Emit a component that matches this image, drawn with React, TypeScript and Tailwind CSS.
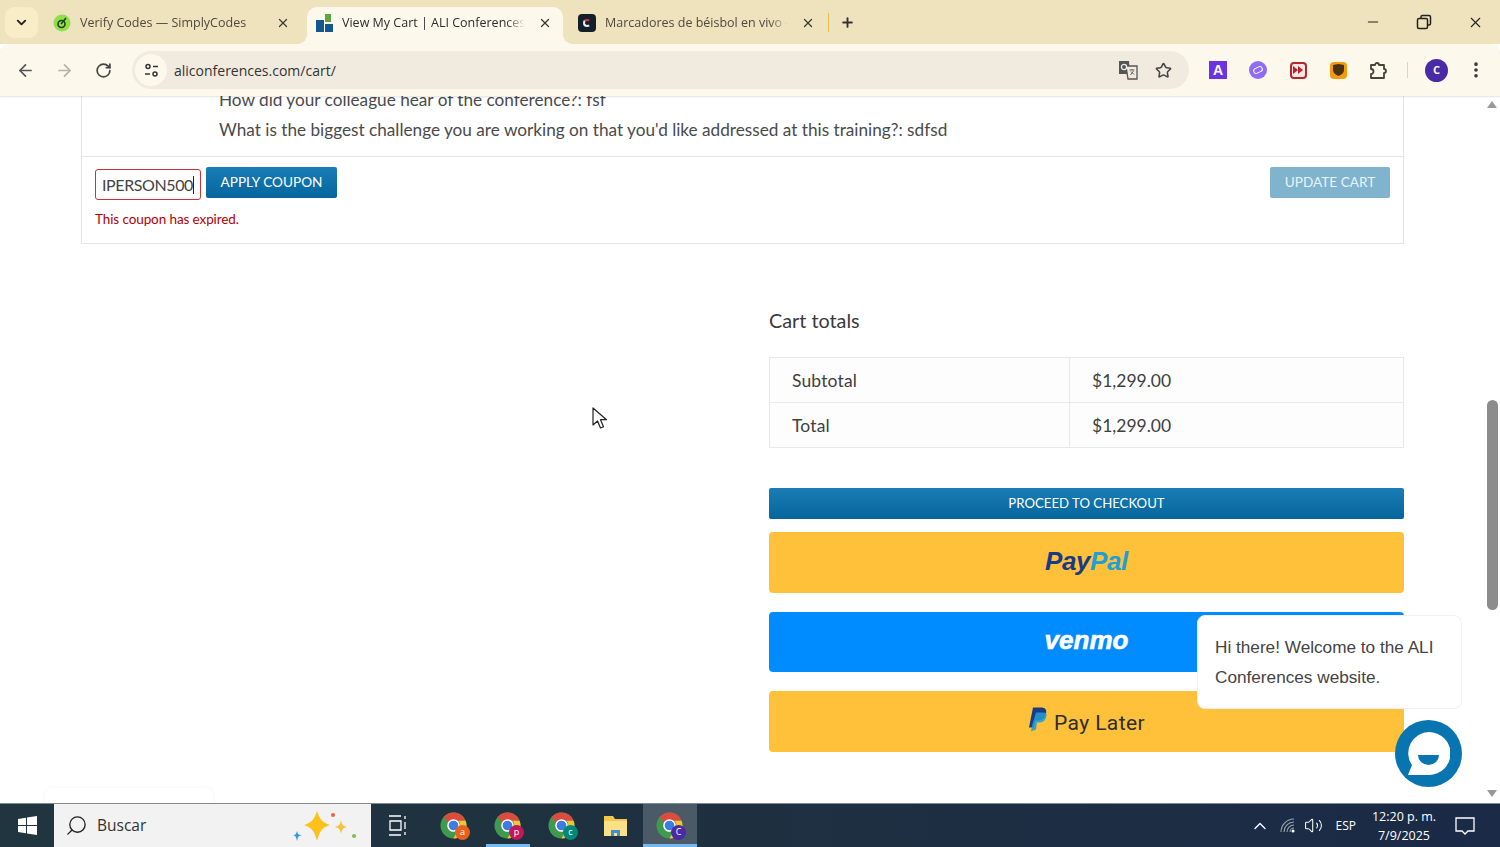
import { ArrowLeft, ArrowRight, RotateCw, Star, X, Plus, ChevronDown, Minus, EllipsisVertical, ChevronUp, Volume2, Search } from 'lucide-react';

function ChromeIcon({ badge, color }: { badge: string; color: string }) {
  return (
    <div className="relative w-[28px] h-[32px] flex items-center justify-center">
      <svg width="27" height="27" viewBox="0 0 28 28">
        <circle cx="14" cy="14" r="13.5" fill="#3f9a4f" />
        <path d="M14 .5A13.5 13.5 0 0 1 26.5 9H14a5 5 0 0 0-5 3L4 5A13.5 13.5 0 0 1 14 .5z" fill="#dd4b3e" />
        <path d="M26.5 9A13.5 13.5 0 0 1 14 27.5L19 17a5 5 0 0 0 0-8z" fill="#f4c531" />
        <circle cx="14" cy="14" r="6.5" fill="#fff" />
        <circle cx="14" cy="14" r="5" fill="#3d7de0" />
      </svg>
      <div className={`absolute right-[-3px] bottom-[2px] w-[15px] h-[15px] rounded-full flex items-center justify-center text-[9px] text-white ${color}`}>
        {badge}
      </div>
    </div>
  );
}

function Tab({ title, active, icon }: { title: string; active?: boolean; icon: React.ReactNode }) {
  return (
    <div className={`relative flex items-center h-[37px] pb-[6px] pl-[8px] w-[256px] shrink-0 ${active ? 'bg-[#fdf8ec] rounded-t-[10px]' : ''}`}>
      {active && (
        <>
          <div className="absolute -left-[10px] bottom-0 w-[10px] h-[10px] bg-[radial-gradient(circle_at_0_0,transparent_10px,#fdf8ec_10px)]" />
          <div className="absolute -right-[10px] bottom-0 w-[10px] h-[10px] bg-[radial-gradient(circle_at_100%_0,transparent_10px,#fdf8ec_10px)]" />
        </>
      )}
      <div className="w-[18px] h-[18px] flex items-center justify-center shrink-0">{icon}</div>
      <span className={`ml-[9px] w-[183px] overflow-hidden whitespace-nowrap text-[12.5px] leading-[18px] [mask-image:linear-gradient(to_right,black_90%,transparent)] ${active ? 'text-[#2d2d2d]' : 'text-[#4d4a40]'}`}>{title}</span>
      <X className="ml-[13px] w-[14px] h-[14px] text-[#3d3a32] shrink-0" strokeWidth={2.2} />
    </div>
  );
}

function ExtButton({ children }: { children: React.ReactNode }) {
  return <div className="w-[40px] flex items-center justify-center">{children}</div>;
}

export default function App() {
  return (
    <div className="w-[1500px] h-[847px] flex flex-col overflow-hidden bg-white font-['Lato','Noto_Sans',sans-serif]">
      {/* Tab strip */}
      <div className="h-[44px] bg-[#efe3bd] flex items-end shrink-0 font-['Open_Sans',sans-serif]">
        <div className="self-start mt-[7px] ml-[5px] w-[33px] h-[31px] rounded-[9px] bg-[#f8edc6] flex items-center justify-center">
          <ChevronDown className="w-[15px] h-[15px] text-[#222]" strokeWidth={3} />
        </div>
        <div className="ml-[7px] flex items-end gap-[6px]">
          <Tab
            title="Verify Codes — SimplyCodes"
            icon={
              <svg width="18" height="18" viewBox="0 0 18 18" fill="none">
                <circle cx="9" cy="9" r="8.500" fill="#8ee04a" />
                <circle cx="8.500" cy="10" r="3.500" stroke="#24401c" strokeWidth="1.600" />
                <path d="M8 10l5-6" stroke="#24401c" strokeWidth="1.600" />
              </svg>
            }
          />
          <Tab
            active
            title="View My Cart | ALI Conferences"
            icon={
              <svg width="17" height="18" viewBox="0 0 17 18">
                <rect x="0" y="6" width="8" height="12" fill="#14568f" />
                <rect x="9" y="10" width="8" height="8" fill="#14568f" />
                <rect x="9" y="0" width="6" height="8" fill="#5da642" />
              </svg>
            }
          />
          <div className="ml-[1px]">
            <Tab
              title="Marcadores de béisbol en vivo - "
              icon={
                <div className="w-[18px] h-[18px] rounded-[4px] bg-[#13202b] flex items-center justify-center">
                  <div className="w-[8px] h-[8px] rounded-full border-2 border-l-[#e8e8e8] border-t-[#d9363e] border-r-[#13202b] border-b-[#e8e8e8]" />
                </div>
              }
            />
          </div>
        </div>
        <div className="self-center flex items-center ml-[2px]">
          <div className="w-px h-[19px] bg-[#e4bd55]" />
          <Plus className="ml-[11px] w-[15px] h-[15px] text-[#333]" strokeWidth={3} />
        </div>
        <div className="flex-1" />
        <div className="self-center flex items-center h-[44px] pr-[16px] gap-[35px]">
          <Minus className="w-[16px] h-[16px] text-[#222]" strokeWidth={1.6} />
          <svg width="16" height="16" viewBox="0 0 16 16" fill="none" stroke="#222" strokeWidth="1.5">
            <rect x="1.5" y="4.5" width="10" height="10" rx="1.5" />
            <path d="M5 4V3a1.5 1.5 0 0 1 1.5-1.5H13A1.5 1.5 0 0 1 14.5 3v6.5A1.5 1.5 0 0 1 13 11h-1" />
          </svg>
          <X className="w-[17px] h-[17px] text-[#222]" strokeWidth={1.6} />
        </div>
      </div>

      {/* Toolbar */}
      <div className="h-[52px] bg-[#fdf8ec] rounded-t-[10px] flex items-center shrink-0 shadow-[0_1px_2px_rgba(0,0,0,0.12)] z-10 font-['Open_Sans',sans-serif]">
        <ArrowLeft className="ml-[16px] w-[19px] h-[19px] text-[#555]" strokeWidth={2.2} />
        <ArrowRight className="ml-[20px] w-[19px] h-[19px] text-[#b5b2a8]" strokeWidth={2.2} />
        <RotateCw className="ml-[21px] w-[17px] h-[17px] text-[#444]" strokeWidth={2.4} />
        <div className="ml-[20px] w-[1057px] h-[38px] rounded-full bg-[#f1ebdf] flex items-center pl-[3px] pr-[17px]">
          <div className="w-[32px] h-[32px] rounded-full bg-[#fdf8ec] flex items-center justify-center">
            <svg width="15" height="15" viewBox="0 0 15 15" fill="none" stroke="#333" strokeWidth="1.5">
              <circle cx="4" cy="3.5" r="2" />
              <path d="M9 3.5h5M1 11h5" />
              <circle cx="11" cy="11" r="2" />
            </svg>
          </div>
          <span className="ml-[7px] text-[14px] text-[#333]">aliconferences.com/cart/</span>
          <div className="flex-1" />
          <svg width="20" height="20" viewBox="0 0 20 20">
            <path d="M1 1h10l1 13H1z" fill="#555" />
            <path d="M8 6h11v13H10z" fill="#f1ebdf" stroke="#555" strokeWidth="1.3" />
            <circle cx="6" cy="7" r="2.6" fill="none" stroke="#eee" strokeWidth="1.3" />
            <path d="M11.5 10h5M14 9v1M12.5 15l3-4M13 11.5l3 3" stroke="#555" strokeWidth="0.9" />
          </svg>
          <Star className="ml-[17px] w-[17px] h-[17px] text-[#444]" strokeWidth={2.2} />
        </div>
        <div className="ml-[9px] flex items-center">
          <ExtButton>
            <div className="w-[18px] h-[18px] bg-[#6a35e0] flex items-center justify-center text-white text-[14px] font-bold font-['Liberation_Sans',sans-serif]">A</div>
          </ExtButton>
          <ExtButton>
            <div className="w-[18px] h-[18px] rounded-full bg-[#8f6cf0] flex items-center justify-center">
              <div className="w-[10px] h-[6px] rounded-full border-[1.5px] border-white -rotate-[25deg]" />
            </div>
          </ExtButton>
          <ExtButton>
            <div className="w-[17px] h-[17px] rounded-[4px] border-2 border-[#b3262e] bg-[#f9e5e2] flex items-center justify-center">
              <svg width="10" height="8" viewBox="0 0 10 8" fill="#b3262e"><path d="M0 0l5 4-5 4zM5 0l5 4-5 4z" /></svg>
            </div>
          </ExtButton>
          <ExtButton>
            <div className="w-[17px] h-[17px] rounded-[4px] bg-[#f59a0c] flex items-center justify-center">
              <svg width="11" height="12" viewBox="0 0 11 12" fill="#4a3210"><path d="M0 1l5.500-1 5.500 1v5c0 3-3 5-5.500 6C3 11 0 9 0 6z" /></svg>
            </div>
          </ExtButton>
          <ExtButton>
            <svg width="19" height="19" viewBox="0 0 19 19" fill="none" stroke="#45443c" strokeWidth="1.8" strokeLinejoin="round">
              <path d="M2 4h4a2 2 0 0 1 4 0h5v4a2 2 0 0 1 0 4v5H2v-4a2 2 0 0 0 0-5z" />
            </svg>
          </ExtButton>
          <div className="ml-[9px] w-px h-[16px] bg-[#f0d58c]" />
          <div className="ml-[17px] w-[23px] h-[23px] rounded-full bg-[#4a2aa6] flex items-center justify-center text-white text-[11px] font-bold">C</div>
          <EllipsisVertical className="ml-[18px] w-[20px] h-[20px] text-[#3a3a3a]" strokeWidth={2.4} />
        </div>
      </div>

      {/* Page */}
      <div className="relative flex-1 flex overflow-hidden min-h-0">
        <div className="flex-1 pl-[81px] pr-[80px] text-[#444]">
          <div className="border-x border-b border-[#e5e5e5] -mt-[11px]">
            <div className="pl-[137px] pb-[11px] text-[17.2px] leading-[30px] text-[#4a4a4a] border-b border-[#e5e5e5]">
              <div>How did your colleague hear of the conference?: fsf</div>
              <div>What is the biggest challenge you are working on that you'd like addressed at this training?: sdfsd</div>
            </div>
            <div className="h-[86px] pl-[13px] pr-[13px] pt-[10px]">
              <div className="flex items-start justify-between">
                <div className="flex items-start">
                  <div className="mt-[2px] w-[106px] h-[31px] border border-[#c8323a] rounded-[3px] flex items-center pl-[6px] text-[16px] text-[#444] bg-white tracking-[-0.4px]">
                    IPERSON500<span className="w-px h-[18px] bg-[#222]" />
                  </div>
                  <button className="ml-[5px] w-[131px] h-[31px] pb-[1px] rounded-[2px] bg-gradient-to-b from-[#1a7db5] to-[#04669d] text-white text-[13.6px]">APPLY COUPON</button>
                </div>
                <button className="w-[120px] h-[31px] pb-[1px] rounded-[2px] bg-[#7fb3ce] text-[#e8f2f7] text-[13.6px]">UPDATE CART</button>
              </div>
              <div className="mt-[10px] text-[13.5px] leading-[18px] text-[#b30000] tracking-[-0.1px]">This coupon has expired.</div>
            </div>
          </div>

          <div className="ml-[688px] mt-[62px]">
            <h2 className="text-[19.8px] leading-[28px] font-normal text-[#3a3a3a]">Cart totals</h2>
            <div className="mt-[23px] border border-[#e8e8e8] bg-[#fdfdfd] text-[17.5px] text-[#3f3f3f]">
              <div className="flex h-[45px] border-b border-[#e8e8e8]">
                <div className="w-[300px] pl-[22px] pt-[2px] flex items-center border-r border-[#e8e8e8] tracking-[0.15px]">Subtotal</div>
                <div className="pl-[22px] pt-[2px] flex items-center">$1,299.00</div>
              </div>
              <div className="flex h-[44px]">
                <div className="w-[300px] pl-[22px] pt-[2px] flex items-center border-r border-[#e8e8e8] tracking-[0.15px]">Total</div>
                <div className="pl-[22px] pt-[2px] flex items-center">$1,299.00</div>
              </div>
            </div>
            <button className="mt-[40px] w-full h-[31px] rounded-[2px] bg-gradient-to-b from-[#1a7db5] to-[#04669d] text-white text-[13.2px] block">PROCEED TO CHECKOUT</button>
            <div className="mt-[13px] h-[61px] pb-[2px] rounded-[4px] bg-[#ffc139] flex items-center justify-center text-[26px] font-bold italic font-['Liberation_Sans',sans-serif] tracking-[-0.4px]">
              <span className="text-[#1b3a86]">Pay</span>
              <span className="text-[#1f9ed8]">Pal</span>
            </div>
            <div className="mt-[19px] h-[60px] pb-[3px] rounded-[4px] bg-[#008cff] flex items-center justify-center text-[26px] font-bold italic text-white font-['Liberation_Sans',sans-serif] [-webkit-text-stroke:0.6px_white]">venmo</div>
            <div className="mt-[19px] h-[61px] rounded-[4px] bg-[#ffc139] flex items-center justify-center">
              <svg width="19" height="25" viewBox="0 0 19 24" className="-mt-[4px]">
                <path d="M5 0h8c4 0 6 2 5 6-1 5-4 7-8 7H7l-1 7H1z" fill="#1b3a86" />
                <path d="M8 5h8c3 0 3 3 2 5-1 4-4 5-7 5H9l-1 7-5 2 1-6z" fill="#1f9ed8" opacity="0.85" />
              </svg>
              <span className="ml-[7px] pt-[4px] text-[21px] text-[#2c2e2f] font-['Roboto',sans-serif] tracking-[0.4px]">Pay Later</span>
            </div>
          </div>
        </div>

        {/* Scrollbar */}
        <div className="w-[16px] shrink-0 flex flex-col items-center justify-between pt-[5px] pb-[6px] relative">
          <div className="w-0 h-0 border-x-[5px] border-x-transparent border-b-[7px] border-b-[#999]" />
          <div className="absolute top-[304px] left-[3px] w-[11px] h-[210px] rounded-full bg-[#8c8c8c]" />
          <div className="w-0 h-0 border-x-[5px] border-x-transparent border-t-[7px] border-t-[#999]" />
        </div>

        {/* Chat bubble */}
        <div className="absolute left-[1197px] top-[519px] w-[265px] h-[94px] rounded-[8px] bg-white border border-[#eef0f6] pl-[17px] pt-[16px] text-[17.2px] leading-[30px] text-[#444] font-['Liberation_Sans',sans-serif]">
          Hi there! Welcome to the ALI<br />Conferences website.
        </div>
        {/* Chat button */}
        <div className="absolute left-[1395px] top-[624px] w-[67px] h-[67px] rounded-full bg-[#0875b0] flex items-center justify-center">
          <svg width="43" height="43" viewBox="0 0 43 43">
            <path d="M22 0a21 21 0 0 1 0 43H1l4-10A21 21 0 0 1 22 0z" fill="#fff" />
            <path d="M11 23h21a10.500 10 0 0 1-21 0z" fill="#0875b0" />
          </svg>
        </div>
        {/* Mouse pointer */}
        <svg className="absolute left-[592px] top-[311px]" width="16" height="23" viewBox="0 0 16 23">
          <path d="M1 1v17l4.500-4 3 7 3-1.300-3-7h6z" fill="#fff" stroke="#222" strokeWidth="1.200" strokeLinejoin="round" />
        </svg>
        {/* Peek of a widget behind the taskbar */}
        <div className="absolute left-[45px] bottom-0 w-[168px] h-[15px] rounded-t-[8px] bg-white shadow-[0_0_5px_rgba(0,0,0,0.05)]" />
      </div>

      {/* Taskbar */}
      <div className="h-[44px] shrink-0 flex items-stretch bg-gradient-to-r from-[#20353f] via-[#1e3040] to-[#1a2a47] border-t border-[#7d8a90] font-['Open_Sans',sans-serif]">
        <div className="w-[54px] flex items-center justify-center">
          <svg width="19" height="19" viewBox="0 0 19 19" fill="#fff">
            <path d="M0 3l8-1.200V9H0zM9 1.600L19 0v9H9zM0 10h8v7.200L0 16zM9 10h10v9L9 17.400z" />
          </svg>
        </div>
        <div className="w-[317px] bg-[#f2f2f2] flex items-center pl-[11px]">
          <Search className="w-[23px] h-[23px] text-[#222] -scale-x-100" strokeWidth={1.4} />
          <span className="ml-[9px] text-[15.500px] text-[#333]">Buscar</span>
          <svg className="ml-[auto] mr-[10px]" width="70" height="36" viewBox="0 0 70 36">
            <path d="M26 3c3 9 5 11 13 14-8 3-10 5-13 16-3-11-5-13-13-16 8-3 10-5 13-14z" fill="#fcc21b" />
            <path d="M50 12c1 5 2 6 6 7-4 1-5 2-6 7-1-5-2-6-6-7 4-1 5-2 6-7z" fill="#f7c13a" />
            <path d="M6 23c1 3 1 4 5 4-4 1-4 2-5 6-1-4-1-5-4-6 3 0 3-1 4-4z" fill="#2c9be0" />
            <circle cx="42" cy="7" r="2" fill="#e8663d" />
            <circle cx="63" cy="28" r="2" fill="#7cc04b" />
          </svg>
        </div>
        <div className="w-[52px] flex items-center justify-center">
          <svg width="19" height="21" viewBox="0 0 19 21" fill="none" stroke="#fff" strokeWidth="1.300">
            <path d="M1 1h12M1 20h12M2 6h11v9H2zM17 1v3M17 7v7M17 17v3" />
          </svg>
        </div>
        <div className="ml-[4px] flex items-center">
          <div className="w-[54px] pr-[2px] h-full flex items-center justify-center"><ChromeIcon badge="a" color="bg-[#e8601c]" /></div>
          <div className="relative w-[54px] pr-[2px] h-full flex items-center justify-center">
            <ChromeIcon badge="p" color="bg-[#c2185b]" />
            <div className="absolute left-[5px] right-[5px] bottom-0 h-[3px] bg-[#76b9ed]" />
          </div>
          <div className="w-[54px] pr-[2px] h-full flex items-center justify-center"><ChromeIcon badge="c" color="bg-[#00897b]" /></div>
          <div className="w-[54px] pr-[2px] h-full flex items-center justify-center">
            <svg width="25" height="24" viewBox="0 0 25 24">
              <path d="M1 2h9l2 3h12v17H1z" fill="#f2c94c" />
              <rect x="1" y="7" width="23" height="15" fill="#fbe08a" />
              <path d="M8 22v-6h9v6h-3v-3h-3v3z" fill="#3d8fd9" />
            </svg>
          </div>
          <div className="relative w-[54px] pr-[2px] h-full flex items-center justify-center bg-[#4a5a66]">
            <ChromeIcon badge="C" color="bg-[#4a2aa6]" />
            <div className="absolute left-0 right-0 bottom-0 h-[3px] bg-[#76b9ed]" />
          </div>
        </div>
        <div className="flex-1" />
        <div className="flex items-center text-white pr-[25px]">
          <ChevronUp className="w-[20px] h-[20px]" strokeWidth={1.6} />
          <svg className="ml-[10px]" width="16" height="16" viewBox="0 0 16 16" fill="none" stroke="#9aa5ad" strokeWidth="1.100">
            <path d="M1 14A13 13 0 0 1 14 1M4 14A10 10 0 0 1 14 4M7 14a7 7 0 0 1 7-7M10 14a4 4 0 0 1 4-4" />
            <circle cx="13" cy="13" r="1.500" fill="#fff" stroke="none" />
          </svg>
          <Volume2 className="ml-[8px] w-[19px] h-[19px]" strokeWidth={1.3} />
          <span className="ml-[13px] text-[12px]">ESP</span>
          <div className="ml-[15px] text-[12.500px] leading-[19px] text-center w-[66px] whitespace-nowrap">
            <div>12:20 p. m.</div>
            <div>7/9/2025</div>
          </div>
          <svg className="ml-[18px]" width="20" height="18" viewBox="0 0 20 18" fill="none" stroke="#fff" strokeWidth="1.300">
            <path d="M1 1h18v13h-6l-3 3-3-3H1z" />
          </svg>
        </div>
      </div>
    </div>
  );
}
